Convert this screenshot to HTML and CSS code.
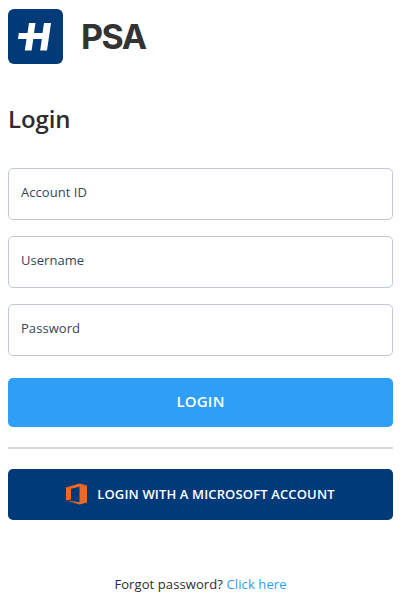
FILE: index.html
```html
<!DOCTYPE html>
<html lang="en">
<head>
    <meta charset="UTF-8">
    <meta name="viewport" content="width=device-width, initial-scale=1.0">
    <title>PSA Login</title>
    <link rel="stylesheet" href="styles.css">
</head>
<body>
    <div class="container">
        <div class="logo">
            <svg class="logo-icon" viewBox="0 0 55 55" width="55" height="55">
                <rect width="55" height="55" rx="6" fill="#003a78"/>
                <path fill="#fff" d="M21 14H27.500L26 24h8.500L36 14H43l-4 27.500h-6.800L33.800 30h-8.500L23.600 41.500h-6.800L18.500 30H10l.8-6h8.700z"/>
            </svg>
            <span class="logo-text">PSA</span>
        </div>
        <h1>Login</h1>
        <form>
            <input type="text" placeholder="Account ID">
            <input type="text" placeholder="Username">
            <input type="password" placeholder="Password">
            <button type="button" class="btn-login">LOGIN</button>
            <hr>
            <button type="button" class="btn-microsoft">
                <svg viewBox="0 0 21 22" width="21" height="22">
                    <path fill="#f26722" fill-rule="evenodd" d="M0 4.500 13.500 0.500 21 2.500v17l-7.500 2L0 17.300zM5 5.700v10.800L0 17.300l13.500 1.900V3.700z"/>
                </svg>
                LOGIN WITH A MICROSOFT ACCOUNT
            </button>
        </form>
        <p class="forgot">Forgot password? <a href="#">Click here</a></p>
    </div>
</body>
</html>
```

FILE: styles.css
```css
* {
    box-sizing: border-box;
}
body {
    margin: 0;
    background: #fff;
    color: #2d2d2d;
    font-family: "Open Sans", sans-serif;
    font-size: 13px;
}
.container {
    padding: 9px 12px 0 8px;
}
.logo {
    display: flex;
    align-items: center;
    height: 55px;
}
.logo-icon {
    display: block;
}
.logo-text {
    margin: -1px 0 0 18px;
    color: #333;
    font-family: Inter, sans-serif;
    font-size: 34px;
    font-weight: 700;
    letter-spacing: -1.5px;
}
h1 {
    margin: 38px 0 33px;
    font-size: 24px;
    line-height: 33px;
    font-weight: 600;
    letter-spacing: -0.1px;
}
input {
    display: block;
    width: 100%;
    height: 52px;
    margin-bottom: 16px;
    padding: 0 12px 5px;
    border: 1px solid #c0c8d9;
    border-radius: 5px;
    font-family: inherit;
    font-size: 13px;
}
input::placeholder {
    color: #33475b;
    letter-spacing: 0.05px;
}
button {
    display: flex;
    align-items: center;
    justify-content: center;
    width: 100%;
    padding: 0 0 2px;
    border: 0;
    border-radius: 5px;
    color: #fff;
    font-family: inherit;
    font-weight: 600;
}
.btn-login {
    height: 49px;
    margin-top: 22px;
    padding-bottom: 3px;
    background: #2e9ef7;
    font-size: 15px;
    letter-spacing: 0.2px;
}
hr {
    height: 2px;
    margin: 20px 0;
    border: 0;
    background: #d8d8d8;
}
.btn-microsoft {
    height: 51px;
    gap: 10px;
    background: #003a78;
    font-size: 13px;
    letter-spacing: 0.14px;
}
.forgot {
    margin: 55px 0 0;
    line-height: 18px;
    text-align: center;
    letter-spacing: 0.1px;
}
.forgot a {
    color: #2e9ef7;
    text-decoration: none;
}
```
